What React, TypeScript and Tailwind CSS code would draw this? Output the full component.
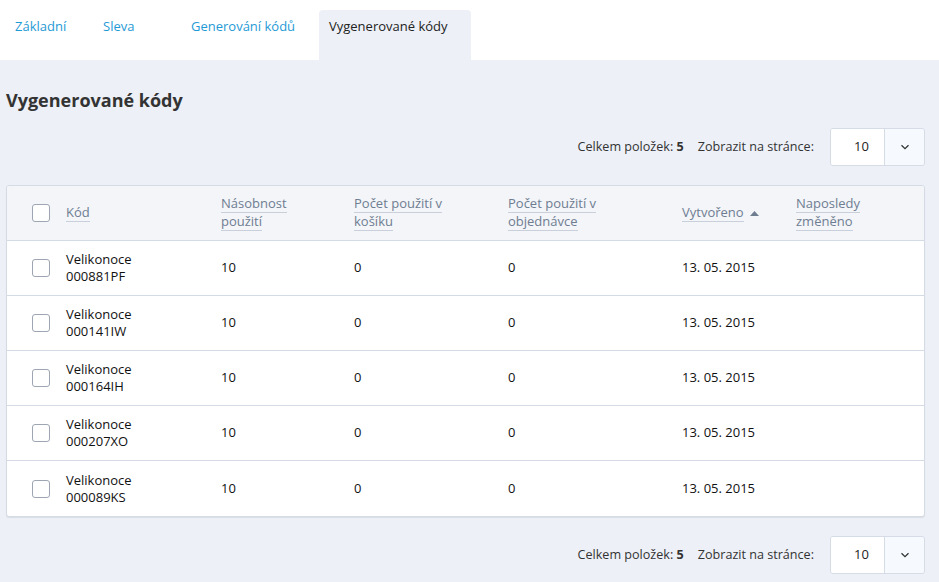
import React from 'react';

const rows = [
  { code: '000881PF' },
  { code: '000141IW' },
  { code: '000164IH' },
  { code: '000207XO' },
  { code: '000089KS' },
];

function Checkbox() {
  return <span className="block h-[18px] w-[18px] rounded-[3px] border border-[#9ea6b3] bg-white" />;
}

function HeadLink({ children }: { children: React.ReactNode }) {
  return (
    <span className="border-b border-[#c9d0db] text-[#6f7d91] leading-[17px]">{children}</span>
  );
}

function Pager() {
  return (
    <div className="flex items-center justify-end pr-[14px] text-[12.6px] text-[#333]">
      <span className="mr-[14px]">
        Celkem položek: <b className="font-bold">5</b>
      </span>
      <span className="mr-[16px]">Zobrazit na stránce:</span>
      <div className="flex h-[38px] overflow-hidden rounded-[3px] border border-[#d6dce6]">
        <div className="flex w-[53px] items-center justify-center bg-white pl-[8px] text-[13px] text-[#222]">10</div>
        <div className="flex w-[40px] items-center justify-center border-l border-[#d6dce6] bg-[#f6f9fd]">
          <svg width="10" height="6" viewBox="0 0 10 6" fill="none">
            <path d="M1.5 1.2 5 4.6 8.5 1.2" stroke="#333" strokeWidth="1.3" />
          </svg>
        </div>
      </div>
    </div>
  );
}

export default function App() {
  const cols = 'grid grid-cols-[59px_155px_133px_154px_174px_114px_1fr]';
  return (
    <div className="min-h-[582px] bg-[#edf0f7]" style={{ fontFamily: '"Open Sans", "Noto Sans", sans-serif' }}>
      <div className="flex h-[60px] items-end bg-white pl-[5px] text-[13px] text-[#1f9ad6]">
        <div className="flex h-[50px] w-[88px] items-start pl-[10px] pt-[7px]">Základní</div>
        <div className="flex h-[50px] w-[88px] items-start pl-[10px] pt-[7px]">Sleva</div>
        <div className="flex h-[50px] w-[138px] items-start pl-[10px] pt-[7px]">Generování kódů</div>
        <div className="flex h-[50px] w-[152px] items-start rounded-t-[4px] bg-[#edf0f7] pl-[10px] pt-[7px] text-[#222]">
          Vygenerované kódy
        </div>
      </div>

      <h1 className="px-[6px] pt-[27px] text-[18px] font-bold text-[#333]">Vygenerované kódy</h1>

      <div className="mt-[14px]">
        <Pager />
      </div>

      <div className="mx-[6px] mt-[19px] w-[919px] overflow-hidden rounded-[3px] border border-[#d5dbe5] bg-white shadow-[0_1px_1px_rgba(0,0,0,0.08)] text-[13px]">
        <div className={`${cols} h-[55px] items-center border-b border-[#d5dbe5] bg-[#f3f5f9]`}>
          <div className="pl-[25px]">
            <Checkbox />
          </div>
          <div>
            <HeadLink>Kód</HeadLink>
          </div>
          <div className="flex flex-col items-start">
            <HeadLink>Násobnost</HeadLink>
            <HeadLink>použití</HeadLink>
          </div>
          <div className="flex flex-col items-start">
            <HeadLink>Počet použití v</HeadLink>
            <HeadLink>košíku</HeadLink>
          </div>
          <div className="flex flex-col items-start">
            <HeadLink>Počet použití v</HeadLink>
            <HeadLink>objednávce</HeadLink>
          </div>
          <div className="flex items-center gap-[6px]">
            <HeadLink>Vytvořeno</HeadLink>
            <svg width="9" height="5" viewBox="0 0 9 5">
              <path d="M0 5 4.5 0 9 5Z" fill="#6f7d91" />
            </svg>
          </div>
          <div className="flex flex-col items-start">
            <HeadLink>Naposledy</HeadLink>
            <HeadLink>změněno</HeadLink>
          </div>
        </div>
        {rows.map((r, i) => (
          <div
            key={r.code}
            className={`${cols} h-[55px] items-center text-[#111] ${i < rows.length - 1 ? 'border-b border-[#d5dbe5]' : ''}`}
          >
            <div className="pl-[25px]">
              <Checkbox />
            </div>
            <div className="leading-[17px]">
              Velikonoce
              <br />
              {r.code}
            </div>
            <div>10</div>
            <div>0</div>
            <div>0</div>
            <div>13. 05. 2015</div>
            <div />
          </div>
        ))}
      </div>

      <div className="mt-[19px] pb-[8px]">
        <Pager />
      </div>
    </div>
  );
}
